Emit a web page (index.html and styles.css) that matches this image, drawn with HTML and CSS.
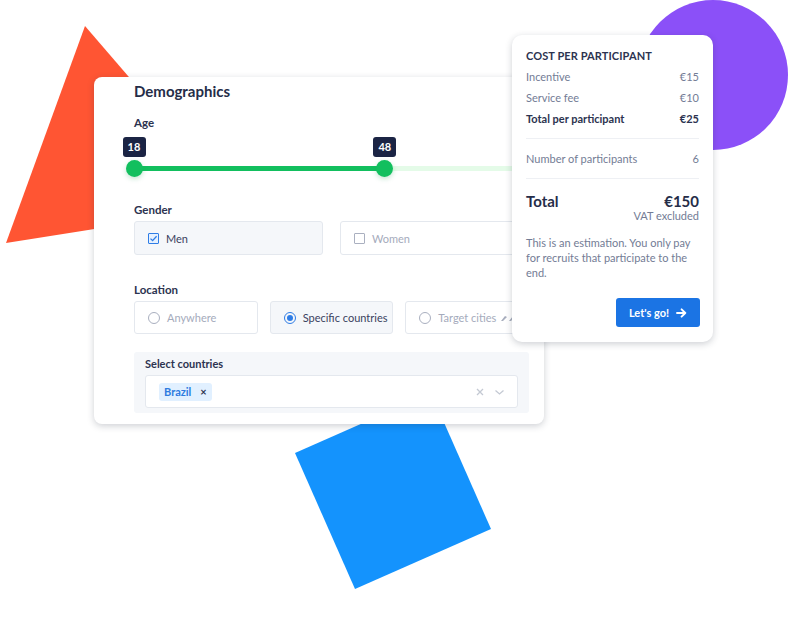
FILE: index.html
```html
<!DOCTYPE html>
<html lang="en">
<head>
<meta charset="utf-8">
<title>Demographics</title>
<link rel="stylesheet" href="styles.css">
</head>
<body>
<div class="stage">
  <svg class="shapes" width="788" height="640" viewBox="0 0 788 640" aria-hidden="true">
    <polygon points="85,26 6,243 240,206" fill="#ff5533"/>
    <circle cx="713" cy="75" r="75" fill="#8b50f8"/>
    <polygon points="295,453 355,589 491,529 431,393" fill="#1493fd"/>
  </svg>

  <section class="card demo">
    <h2 class="title">Demographics</h2>

    <div class="label label-age">Age</div>
    <div class="slider">
      <div class="track"></div>
      <div class="track-fill" style="width: 63.5%"></div>
      <div class="badge" style="left: 0%">18</div>
      <div class="badge" style="left: 63.5%">48</div>
      <div class="knob" style="left: 0%"></div>
      <div class="knob" style="left: 63.5%"></div>
    </div>

    <div class="label label-gap">Gender</div>
    <div class="options two">
      <div class="option selected">
        <span class="checkbox checked">
          <svg width="9" height="9" viewBox="0 0 9 9"><path d="M1.5 4.6 L3.6 6.6 L7.6 2.2" fill="none" stroke="#2f7de6" stroke-width="1.3"/></svg>
        </span>
        <span class="opt-text">Men</span>
      </div>
      <div class="option">
        <span class="checkbox"></span>
        <span class="opt-text muted">Women</span>
      </div>
    </div>

    <div class="label label-gap2">Location</div>
    <div class="options three">
      <div class="option">
        <span class="radio"></span>
        <span class="opt-text muted">Anywhere</span>
      </div>
      <div class="option selected">
        <span class="radio on"></span>
        <span class="opt-text">Specific countries</span>
      </div>
      <div class="option">
        <span class="radio"></span>
        <span class="opt-text muted">Target cities</span>
        <svg class="pro" width="16" height="8" viewBox="0 0 16 8"><path d="M1 7 L5 2 L7 3 L3 7 Z M9 7 L13 2 L15 3 L11 7 Z" fill="#a7adbd"/></svg>
      </div>
    </div>

    <div class="panel">
      <div class="panel-label">Select countries</div>
      <div class="select">
        <span class="tag">Brazil <span class="tag-x">×</span></span>
        <span class="select-icons">
          <svg width="10" height="10" viewBox="0 0 10 10"><path d="M2 2 L8 8 M8 2 L2 8" stroke="#c4c9d3" stroke-width="1.3"/></svg>
          <svg width="11" height="10" viewBox="0 0 11 10"><path d="M1.5 3.5 L5.5 7 L9.5 3.5" fill="none" stroke="#c4c9d3" stroke-width="1.3"/></svg>
        </span>
      </div>
    </div>
  </section>

  <aside class="card cost">
    <div class="cost-title">COST PER PARTICIPANT</div>
    <div class="row first"><span>Incentive</span><span>€15</span></div>
    <div class="row"><span>Service fee</span><span>€10</span></div>
    <div class="row strong"><span>Total per participant</span><span>€25</span></div>
    <div class="divider"></div>
    <div class="row"><span>Number of participants</span><span>6</span></div>
    <div class="divider"></div>
    <div class="total"><span>Total</span><span>€150</span></div>
    <div class="vat">VAT excluded</div>
    <p class="note">This is an estimation. You only pay<br>for recruits that participate to the<br>end.</p>
    <div class="actions">
      <button class="go">Let's go!
        <svg width="11" height="10" viewBox="0 0 11 10"><path d="M1 5 H9.2 M5.6 1.3 L9.3 5 L5.6 8.7" fill="none" stroke="#fff" stroke-width="1.9" stroke-linecap="round" stroke-linejoin="round"/></svg>
      </button>
    </div>
  </aside>
</div>
</body>
</html>
```

FILE: styles.css
```css
* { box-sizing: border-box; }

html, body {
  margin: 0;
  padding: 0;
  background: #ffffff;
}

body {
  font-family: "Lato", "Noto Sans", sans-serif;
  color: #28304a;
}

.stage {
  position: relative;
  width: 788px;
  height: 640px;
  overflow: hidden;
}

.shapes {
  position: absolute;
  left: 0;
  top: 0;
}

.card {
  position: absolute;
  background: #ffffff;
  border-radius: 8px;
  box-shadow: 0 2px 7px rgba(30, 40, 60, 0.22);
}

/* ---------- Demographics card ---------- */
.demo {
  left: 94px;
  top: 77px;
  width: 450px;
  height: 347px;
  padding: 4px 15px 11px 40px;
  display: flex;
  flex-direction: column;
}

.title {
  margin: 0;
  font-size: 15px;
  line-height: 20px;
  font-weight: 700;
  color: #252d48;
}

.label {
  font-size: 11.5px;
  line-height: 14px;
  font-weight: 700;
  color: #2c3350;
}

.label-age { margin-top: 15px; }
.label-gap { margin-top: 26px; }
.label-gap2 { margin-top: 28px; }

.slider {
  position: relative;
  margin-top: 7px;
  height: 40px;
}

.track {
  position: absolute;
  left: 0;
  right: 0;
  top: 29px;
  height: 5px;
  border-radius: 3px;
  background: #e4fbe8;
}

.track-fill {
  position: absolute;
  left: 0;
  top: 29px;
  height: 5px;
  background: #12bf5e;
}

.badge {
  position: absolute;
  top: 0;
  width: 23px;
  height: 20px;
  margin-left: -11.5px;
  border-radius: 3px;
  background: #1b2444;
  color: #ffffff;
  font-size: 11px;
  font-weight: 700;
  line-height: 20px;
  text-align: center;
}

.knob {
  position: absolute;
  top: 23px;
  width: 17px;
  height: 17px;
  margin-left: -8.5px;
  border-radius: 50%;
  background: #12bf5e;
  box-shadow: 0 2px 5px rgba(18, 150, 80, 0.25);
}

.options {
  display: grid;
  margin-top: 4px;
}

.options.two {
  grid-template-columns: 1fr 1fr;
  column-gap: 17px;
}

.options.two .option { height: 34px; }

.options.three {
  grid-template-columns: 1fr 1fr 1fr;
  column-gap: 12px;
}

.options.three .option { height: 33px; }

.option {
  display: flex;
  align-items: center;
  gap: 7px;
  padding-left: 13px;
  border: 1px solid #e4e8ee;
  border-radius: 3px;
  background: #ffffff;
  white-space: nowrap;
  overflow: hidden;
}

.option.selected {
  background: #f5f7fa;
}

.opt-text {
  font-size: 11px;
  color: #3a4260;
}

.opt-text.muted {
  color: #a5abbc;
}

.checkbox {
  width: 11px;
  height: 11px;
  border: 1.3px solid #aab0c0;
  border-radius: 1px;
  display: flex;
  align-items: center;
  justify-content: center;
  background: #ffffff;
}

.checkbox.checked {
  border-color: #2f7de6;
  background: #e6f1ff;
}

.radio {
  width: 12px;
  height: 12px;
  border: 1.4px solid #a9afbf;
  border-radius: 50%;
  display: flex;
  align-items: center;
  justify-content: center;
}

.radio.on {
  border-color: #2f7de6;
}

.radio.on::after {
  content: "";
  width: 6px;
  height: 6px;
  border-radius: 50%;
  background: #2f7de6;
}

.pro { margin-left: -3px; }

.panel {
  margin-top: 18px;
  height: 61px;
  padding: 5px 11px 5px 11px;
  background: #f5f7fa;
  border-radius: 3px;
  display: flex;
  flex-direction: column;
}

.panel-label {
  font-size: 11px;
  line-height: 14px;
  font-weight: 700;
  color: #2c3350;
}

.select {
  margin-top: 4px;
  height: 33px;
  background: #ffffff;
  border: 1px solid #e4e8ee;
  border-radius: 3px;
  display: flex;
  align-items: center;
  padding: 0 12px 0 13px;
}

.tag {
  display: inline-flex;
  align-items: center;
  height: 18px;
  padding: 0 5px;
  border-radius: 3px;
  background: #e1f0ff;
  color: #2d7be0;
  font-size: 11px;
  font-weight: 700;
  gap: 9px;
}

.tag-x {
  color: #2c3350;
  font-size: 11px;
  font-weight: 700;
}

.select-icons {
  margin-left: auto;
  display: flex;
  align-items: center;
  gap: 9px;
}

/* ---------- Cost card ---------- */
.cost {
  left: 512px;
  top: 35px;
  width: 201px;
  height: 307px;
  border-radius: 10px;
  padding: 14px 14px 15px 14px;
  display: flex;
  flex-direction: column;
}

.cost-title {
  font-size: 11px;
  line-height: 14px;
  font-weight: 700;
  color: #2c3350;
  letter-spacing: 0.1px;
}

.row {
  display: flex;
  justify-content: space-between;
  height: 21px;
  line-height: 21px;
  font-size: 11px;
  color: #737c95;
}

.row.first { margin-top: 3px; }

.row.strong {
  font-weight: 700;
  color: #2c3350;
}

.divider {
  height: 1px;
  background: #eef0f4;
  margin: 9px 0;
}

.total {
  display: flex;
  justify-content: space-between;
  margin-top: 4px;
  font-size: 15px;
  line-height: 18px;
  font-weight: 700;
  color: #252d48;
}

.vat {
  text-align: right;
  font-size: 11px;
  line-height: 14px;
  margin-top: -1px;
  color: #737c95;
}

.note {
  margin: 12px 0 0 0;
  font-size: 11px;
  line-height: 15px;
  color: #737c95;
}

.actions {
  margin-top: auto;
  display: flex;
  justify-content: flex-end;
  padding-right: 0;
}

.go {
  width: 84px;
  height: 29px;
  margin-right: -1px;
  border: none;
  border-radius: 3px;
  background: #1b74e4;
  color: #ffffff;
  font-family: inherit;
  font-size: 11px;
  font-weight: 700;
  display: flex;
  align-items: center;
  justify-content: center;
  gap: 7px;
  padding: 0;
}
```
